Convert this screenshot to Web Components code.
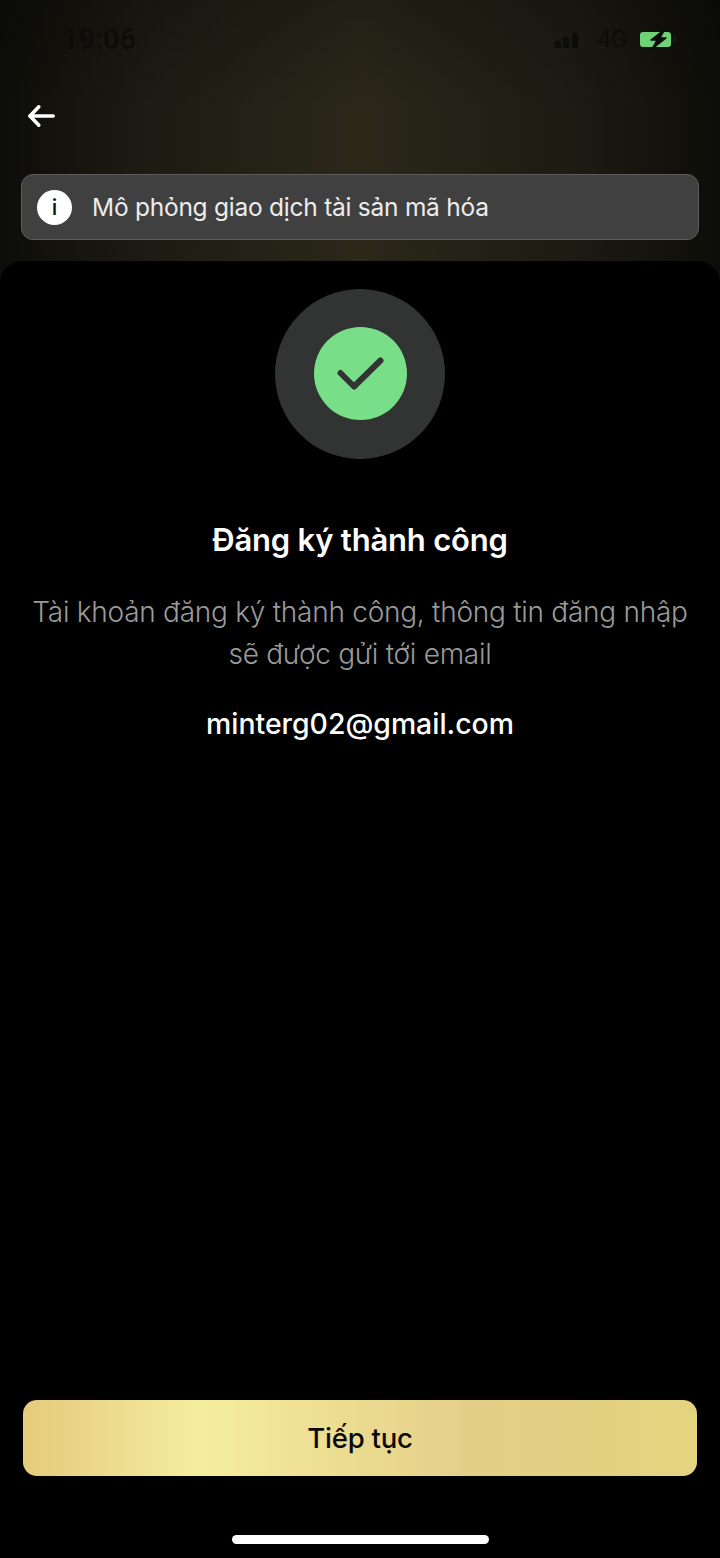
<!DOCTYPE html>
<html lang="vi">
<head>
<meta charset="utf-8">
<title>Đăng ký thành công</title>
<style>
  html, body { margin: 0; background: #000; }
  body { font-family: Inter, "Noto Sans", sans-serif; }
</style>
</head>
<body>
<template id="status-bar-tpl">
  <style>
    :host { display: flex; align-items: center; justify-content: space-between; height: 78px; padding: 0 38px 0 62px; color: #0c0c08; }
    .time { font-size: 29px; font-weight: 500; letter-spacing: 0.1px; font-family: Roboto, sans-serif; }
    .right { display: flex; align-items: center; }
    .net { font-size: 24px; font-family: Roboto, sans-serif; margin: 0 13px 0 13px; }
    svg { display: block; }
  </style>
  <span class="time">19:06</span>
  <div class="right">
    <svg width="29" height="20" viewBox="0 0 29 20">
      <rect x="0" y="12" width="6" height="7" rx="1.5" fill="#0c0c08"/>
      <rect x="8" y="8" width="6" height="11" rx="1.5" fill="#0c0c08"/>
      <rect x="17" y="4" width="6" height="15" rx="1.5" fill="#0c0c08"/>
      <rect x="25" y="2" width="3" height="17" rx="1.5" fill="#1c1a10"/>
    </svg>
    <span class="net">4G</span>
    <svg width="42" height="24" viewBox="0 0 42 24">
      <rect x="0" y="5" width="31" height="15" rx="3" fill="#6fd276"/>
      <path d="M25 2 L11 13 H17 L12 22 L26 11 H20 Z" fill="#0c0c08" stroke="#0c0c08" stroke-width="1.5" stroke-linejoin="round"/>
      <rect x="34" y="9" width="2" height="7" rx="1" fill="#1a1810"/>
    </svg>
  </div>
</template>

<template id="back-button-tpl">
  <style>
    :host { display: block; height: 96px; padding-left: 26px; }
    svg { display: block; margin-top: 20px; }
  </style>
  <svg width="32" height="36" viewBox="0 0 32 36" fill="none" stroke="#fff" stroke-width="3.6" stroke-linecap="round" stroke-linejoin="round">
    <path d="M4 18 H27.200"/>
    <path d="M12.800 8.800 L4 18 L12.800 27.200"/>
  </svg>
</template>

<template id="info-banner-tpl">
  <style>
    :host { display: flex; align-items: center; gap: 20px; height: 64px; margin: 0 21px; padding: 0 15px; background: #404040; border: 1px solid #5c5c5c; border-radius: 12px; color: #ececec; font-size: 24.5px; letter-spacing: -0.25px; }
    .dot { flex: none; width: 35px; height: 35px; border-radius: 50%; background: #fff; color: #111; display: flex; align-items: center; justify-content: center; font-size: 22px; font-weight: 500; }
  </style>
  <span class="dot">i</span>
  <span><slot></slot></span>
</template>

<template id="success-badge-tpl">
  <style>
    :host { display: flex; width: 170px; height: 170px; border-radius: 50%; background: #323434; align-items: center; justify-content: center; }
    .inner { width: 93px; height: 93px; border-radius: 50%; background: #78de88; display: flex; align-items: center; justify-content: center; }
    svg { display: block; }
  </style>
  <div class="inner">
    <svg width="93" height="93" viewBox="0 0 93 93" fill="none" stroke="#323434" stroke-width="6" stroke-linecap="round" stroke-linejoin="round">
      <path d="M26.500 46 L40 59.500 L66.500 33.500"/>
    </svg>
  </div>
</template>

<template id="gold-button-tpl">
  <style>
    :host { display: flex; align-items: center; justify-content: center; height: 76px; border-radius: 14px; color: #0a0a05; font-size: 27.500px; font-weight: 500; letter-spacing: -0.2px;
      background: linear-gradient(90deg, #e6cc7c 0%, #e8d184 6%, #f4ee9f 26%, #efe296 40%, #e4cf88 66%, #e3d182 85%, #e5d47e 100%); }
  </style>
  <slot></slot>
</template>

<template id="success-sheet-tpl">
  <style>
    :host { display: flex; flex-direction: column; align-items: center; flex: 1; background: #000; border-radius: 22px 22px 0 0; padding-top: 27.500px; margin-top: 21px; text-align: center; }
    .title { margin-top: 59.500px; font-size: 31px; line-height: 44px; font-weight: 600; color: #fff; letter-spacing: -0.2px; }
    .desc { margin-top: 29px; font-size: 28px; line-height: 42px; font-weight: 300; color: #9a9a9a; letter-spacing: -0.26px; }
    .email { margin-top: 29px; font-size: 28.400px; line-height: 40px; font-weight: 500; color: #fff; }
    .spacer { flex: 1; }
    .actions { align-self: stretch; padding: 0 23px; }
    .home { width: 257px; height: 9px; border-radius: 5px; background: #fff; margin: 59px 0 14px; }
  </style>
  <success-badge></success-badge>
  <div class="title"><slot name="title"></slot></div>
  <div class="desc"><slot name="desc"></slot></div>
  <div class="email"><slot name="email"></slot></div>
  <div class="spacer"></div>
  <div class="actions"><gold-button><slot name="action"></slot></gold-button></div>
  <div class="home"></div>
</template>

<template id="app-screen-tpl">
  <style>
    :host { display: flex; flex-direction: column; width: 720px; height: 1558px; overflow: hidden;
      background:
        linear-gradient(180deg, rgba(0, 0, 0, 0.22) 0, rgba(0, 0, 0, 0) 110px),
        linear-gradient(90deg, #0d0d09 0%, #1e1c13 22%, #2b281a 50%, #1e1c13 78%, #0d0d09 100%); }
  </style>
  <slot></slot>
</template>

<app-screen>
  <status-bar></status-bar>
  <back-button></back-button>
  <info-banner>Mô phỏng giao dịch tài sản mã hóa</info-banner>
  <success-sheet>
    <span slot="title">Đăng ký thành công</span>
    <span slot="desc">Tài khoản đăng ký thành công, thông tin đăng nhập<br>sẽ được gửi tới email</span>
    <span slot="email">minterg02@gmail.com</span>
    <span slot="action">Tiếp tục</span>
  </success-sheet>
</app-screen>

<script>
'use strict';

function defineFromTemplate(name, templateId) {
  customElements.define(name, class extends HTMLElement {
    constructor() {
      super();
      let root = this.attachShadow({ mode: 'open' });
      root.appendChild(document.getElementById(templateId).content.cloneNode(true));
    }
  });
}

defineFromTemplate('status-bar', 'status-bar-tpl');
defineFromTemplate('back-button', 'back-button-tpl');
defineFromTemplate('info-banner', 'info-banner-tpl');
defineFromTemplate('success-badge', 'success-badge-tpl');
defineFromTemplate('gold-button', 'gold-button-tpl');
defineFromTemplate('success-sheet', 'success-sheet-tpl');
defineFromTemplate('app-screen', 'app-screen-tpl');
</script>
</body>
</html>
